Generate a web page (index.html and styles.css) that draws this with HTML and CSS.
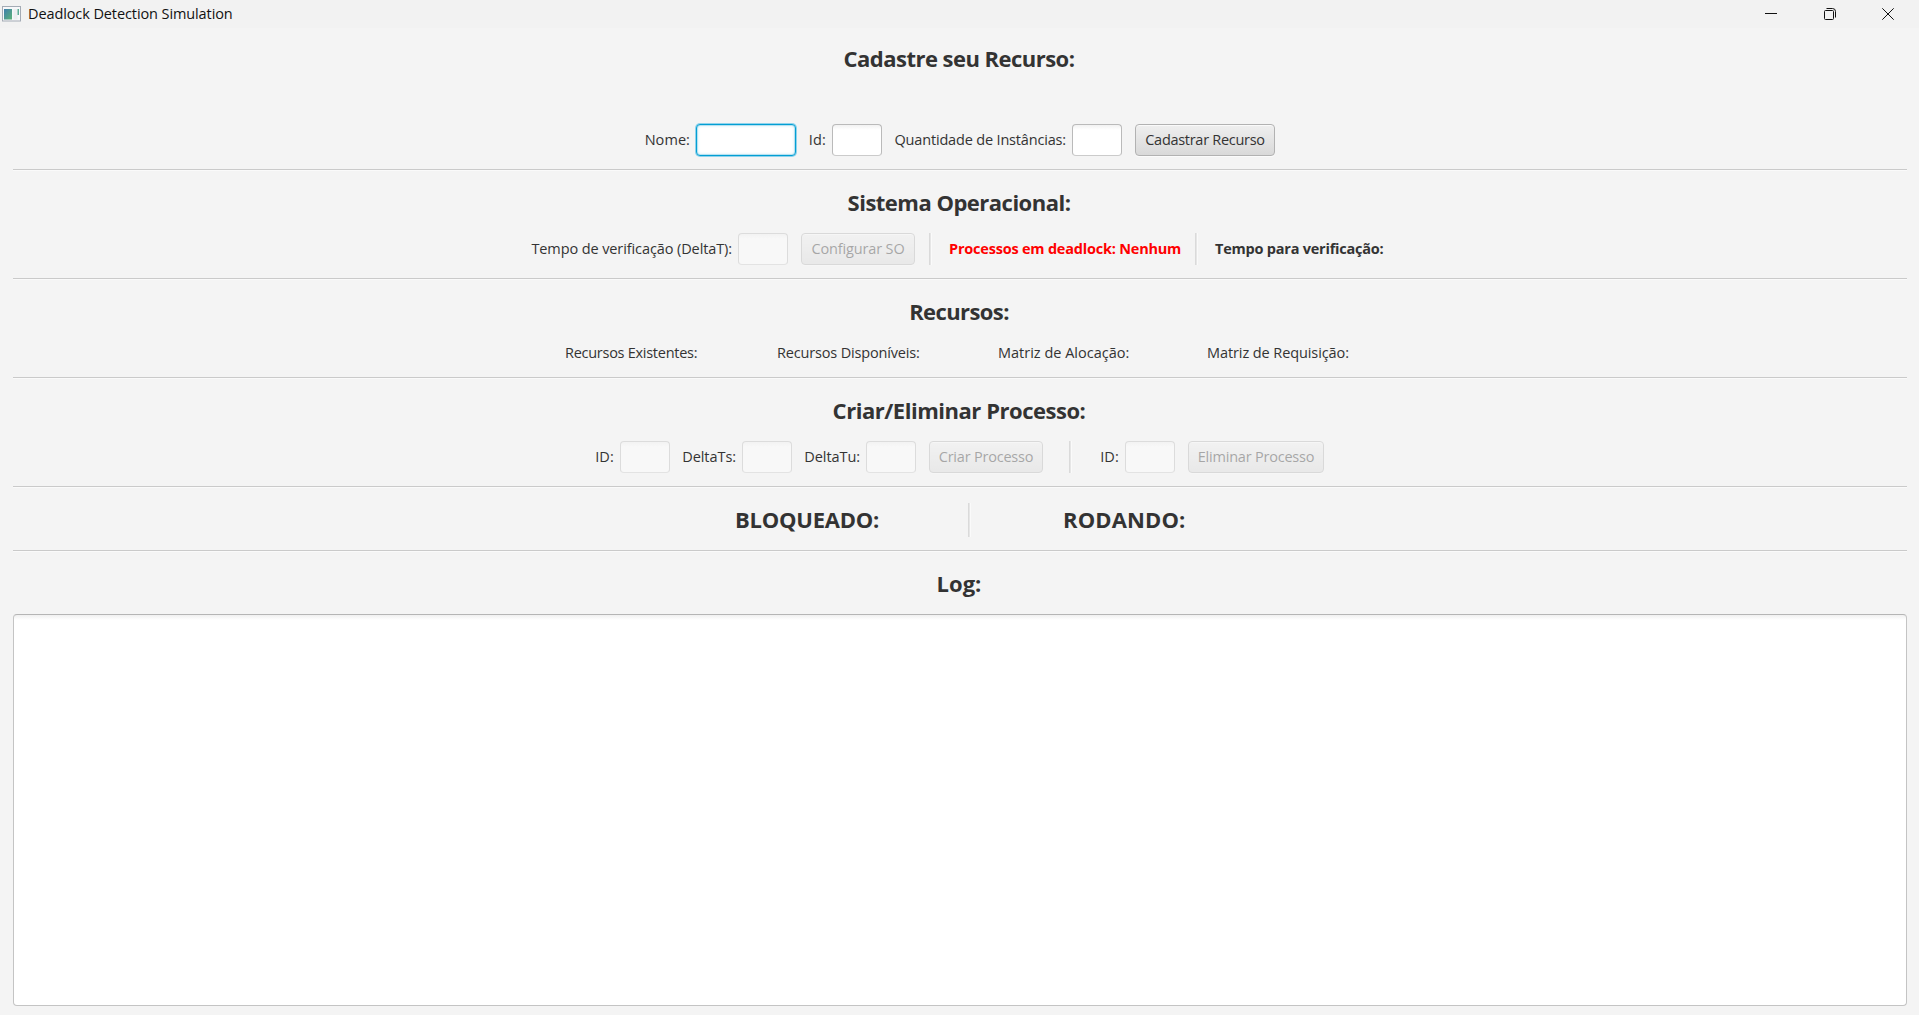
FILE: index.html
```html
<!DOCTYPE html>
<html lang="pt-BR">
<head>
<meta charset="utf-8">
<title>Deadlock Detection Simulation</title>
<link rel="stylesheet" href="styles.css">
</head>
<body>
<header class="titlebar">
  <svg class="app-icon" width="20" height="16" viewBox="0 0 20 16">
    <defs><linearGradient id="g" x1="0" y1="0" x2="1" y2="1"><stop offset="0" stop-color="#3f7fae"/><stop offset="1" stop-color="#5cb377"/></linearGradient></defs>
    <rect x=".5" y=".5" width="18" height="14.5" fill="#f7f8fa" stroke="#a4abb5"/>
    <rect x="2" y="3" width="8" height="10.5" fill="url(#g)"/>
    <rect x="11.5" y="3" width="4" height="10.5" fill="#eceef0"/>
    <rect x="15.5" y="3" width="1.5" height="6" fill="#5fae98"/>
  </svg>
  <span class="title">Deadlock Detection Simulation</span>
  <div class="controls">
    <svg width="12" height="12" viewBox="0 0 12 12"><path d="M0 5.5H12"/></svg>
    <svg width="12" height="12" viewBox="0 0 12 12"><rect x=".5" y="2.5" width="9" height="9" rx="1"/><path d="M2.5 .5H8.5Q11.5 .5 11.5 3.5V9.5"/></svg>
    <svg width="12" height="12" viewBox="0 0 12 12"><path d="M.3 .3L11.7 11.7M11.7 .3L.3 11.7"/></svg>
  </div>
</header>
<main>
  <section class="panel resource">
    <h2 class="t-cadastre">Cadastre seu Recurso:</h2>
    <div class="row row-resource">
      <label class="t-nome">Nome:</label><input class="focused">
      <label class="t-id">Id:</label><input>
      <label class="t-quant">Quantidade de Instâncias:</label><input>
      <i></i><button class="t-cadastrar">Cadastrar Recurso</button>
    </div>
  </section>
  <section class="panel">
    <h2 class="t-sistema">Sistema Operacional:</h2>
    <div class="row row-system">
      <label class="t-tempo">Tempo de verificação (DeltaT):</label><input disabled>
      <i></i><button class="t-config" disabled>Configurar SO</button>
      <i></i><span class="vsep"></span>
      <strong class="deadlock">Processos em deadlock: Nenhum</strong>
      <span class="vsep"></span>
      <strong class="countdown">Tempo para verificação:</strong>
    </div>
  </section>
  <section class="panel">
    <h2 class="t-recursos">Recursos:</h2>
    <div class="row row-matrices">
      <span class="t-exist">Recursos Existentes:</span>
      <span class="t-disp">Recursos Disponíveis:</span>
      <span class="t-aloc">Matriz de Alocação:</span>
      <span class="t-req">Matriz de Requisição:</span>
    </div>
  </section>
  <section class="panel">
    <h2 class="t-criar">Criar/Eliminar Processo:</h2>
    <div class="row row-process">
      <label class="t-pid">ID:</label><input disabled>
      <label class="t-delta">DeltaTs:</label><input disabled>
      <label class="t-delta">DeltaTu:</label><input disabled>
      <i></i><button class="t-criarp" disabled>Criar Processo</button>
      <i></i><span class="vsep"></span>
      <label class="t-pid">ID:</label><input disabled>
      <i></i><button class="t-elim" disabled>Eliminar Processo</button>
    </div>
  </section>
  <section class="panel states">
    <div class="row row-states">
      <h2 class="blocked">BLOQUEADO:</h2>
      <span class="vsep"></span>
      <h2 class="running">RODANDO:</h2>
    </div>
  </section>
  <section class="log">
    <h2>Log:</h2>
    <textarea></textarea>
  </section>
</main>
</body>
</html>
```
FILE: styles.css
```css
* { box-sizing: border-box; }

body {
  margin: 0;
  height: 1015px;
  display: flex;
  flex-direction: column;
  overflow: hidden;
  background: #f4f4f4;
  color: #333;
  font: 14.5px/32px "Open Sans", "Noto Sans", sans-serif;
}

/* Window title bar */
.titlebar {
  flex: none;
  display: flex;
  align-items: center;
  height: 28px;
  padding: 0 25px 0 2px;
  background: #f2f2f2;
  color: #111;
}
.app-icon { margin-right: 6px; margin-top: -1px; }
.title { flex: 1; line-height: 28px; letter-spacing: -.1px; }
.controls { display: flex; gap: 46.5px; }
.controls svg { fill: none; stroke: #111; stroke-width: 1; }

main { flex: 1; display: flex; flex-direction: column; padding: 0 12px 9px 13px; }

/* Sections, each closed by an etched line */
.panel {
  padding: 16px 0 13px;
  border-bottom: 1px solid #cacaca;
  margin-bottom: 1px;
  box-shadow: 0 1px #fafafa;
}
.panel.resource { padding-top: 15px; }
.panel.states { padding-top: 15px; }

h2 {
  margin: 0 0 16px;
  padding-right: 2px;
  font-size: 22px;
  line-height: 30px;
  font-weight: 700;
  text-align: center;
  white-space: nowrap;
}
.resource h2 { margin-bottom: 51px; }

.row { display: grid; justify-content: center; height: 32px; padding-right: 1px; white-space: nowrap; }
.row-resource { grid-template-columns: 52px 100px 36px 50px 190px 50px 13px 140px; }
.row-system { grid-template-columns: 208px 50px 13px 114px 14px 2px 264px 2px 192px; }
.row-matrices { grid-template-columns: 211px 222px 209px 147px; height: 22px; line-height: 22px; }
.row-process { grid-template-columns: 25px 50px 72px 50px 74px 50px 13px 114px 26px 2px 54px 50px 13px 136px; }
.row-states { grid-template-columns: 234px 2px 215px; height: 34px; }
.row-states h2 { margin: 0; line-height: 32px; text-align: left; }
.row-states .blocked { padding-left: 1px; }

label { display: flex; justify-content: flex-end; padding-right: 6px; }

input {
  width: 100%;
  height: 32px;
  border: 1px solid #bababa;
  border-bottom-color: #cbcbcb;
  border-radius: 4px;
  background: linear-gradient(#f2f2f2, #fff 5px);
  outline: none;
}
input.focused {
  border: 1px solid #039ed3;
  background: #fff;
  box-shadow: 0 0 0 1px #8fd3ec, inset 0 0 0 1px #b6e2f1, inset 0 0 3px 1px #d8eff7;
}
input:disabled, button:disabled { opacity: .4; }

button {
  height: 32px;
  padding: 0;
  border: 1px solid #b2b2b2;
  border-radius: 4px;
  background: linear-gradient(#efefef, #d9d9d9);
  box-shadow: inset 0 1px #fafafa, 0 1px #fbfbfb;
  color: #333;
  font: inherit;
  line-height: 30px;
}

.vsep { background: #dadada; border-right: 1px solid #e6e6e6; box-shadow: 1px 0 #fafafa; }
.deadlock { padding-left: 18px; color: #f00; letter-spacing: -.21px; }
.countdown { padding-left: 18px; letter-spacing: -.22px; }

.log { flex: 1; display: flex; flex-direction: column; padding-top: 16px; }
.log textarea {
  flex: 1;
  resize: none;
  border: 1px solid #c4c4c4;
  border-top-color: #b5b5b5;
  border-radius: 4px;
  background: linear-gradient(#f0f0f0, #fff 5px);
  outline: none;
}

/* Tracking for each caption */
.t-cadastre { letter-spacing: -.53px; }
.t-sistema { letter-spacing: -.51px; }
.t-recursos { letter-spacing: -.6px; }
.t-criar { letter-spacing: -.47px; }
.blocked { letter-spacing: -.24px; }
.row-states .running { padding-left: 93px; letter-spacing: .12px; }
.t-nome { letter-spacing: .07px; }
.t-id { letter-spacing: .2px; }
.t-quant { letter-spacing: -.17px; }
.t-cadastrar { letter-spacing: -.29px; }
.t-tempo { letter-spacing: -.1px; }
.t-config { letter-spacing: -.14px; }
.t-exist { letter-spacing: -.27px; }
.t-disp { letter-spacing: -.17px; padding-left: 1px; }
.t-req { letter-spacing: -.09px; }
.t-pid { letter-spacing: .15px; }
.t-delta { letter-spacing: -.06px; }
.t-criarp, .t-elim { letter-spacing: -.21px; }
```
